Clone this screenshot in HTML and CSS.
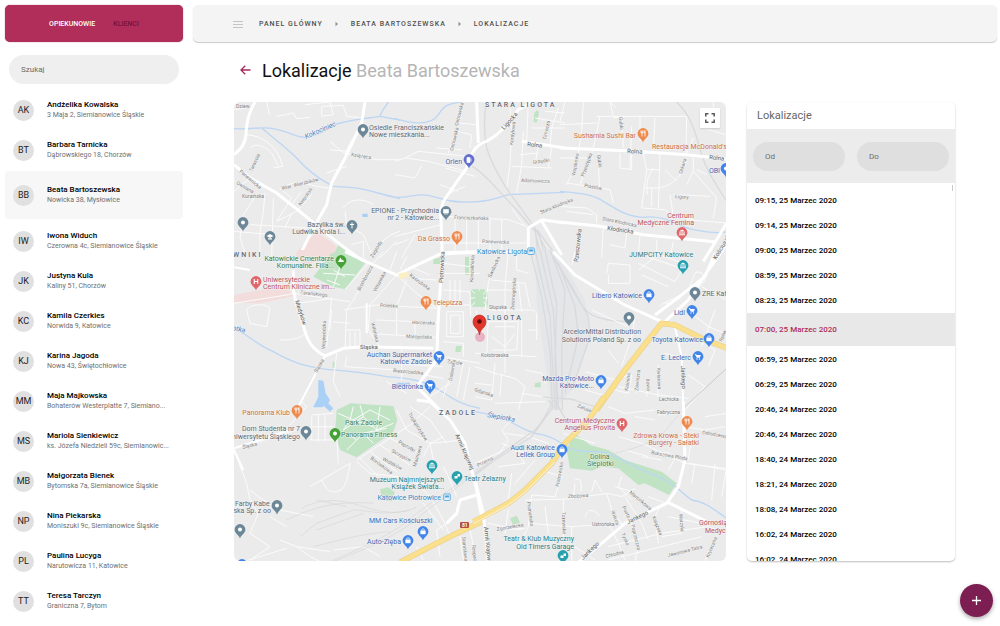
FILE: index.html
```html
<!DOCTYPE html>
<html lang="pl">
<head>
<meta charset="utf-8">
<meta name="viewport" content="width=device-width, initial-scale=1">
<title>Lokalizacje</title>
<link rel="stylesheet" href="styles.css">
</head>
<body>
<div class="app">
  <aside class="sidebar">
    <nav class="tabs">
      <a class="tab tab-active" href="#opiekunowie">OPIEKUNOWIE</a>
      <a class="tab" href="#klienci">KLIENCI</a>
    </nav>
    <input class="field search" type="search" placeholder="Szukaj" aria-label="Szukaj">
    <ul class="people">
      <li class="person"><span class="avatar">AK</span><div class="info"><strong class="name">Andżelika Kowalska</strong><span class="address">3 Maja 2, Siemianowice Śląskie</span></div></li>
      <li class="person"><span class="avatar">BT</span><div class="info"><strong class="name">Barbara Tarnicka</strong><span class="address">Dąbrowskiego 18, Chorzów</span></div></li>
      <li class="person person-active"><span class="avatar">BB</span><div class="info"><strong class="name">Beata Bartoszewska</strong><span class="address">Nowicka 38, Mysłowice</span></div></li>
      <li class="person"><span class="avatar">IW</span><div class="info"><strong class="name">Iwona Widuch</strong><span class="address">Czerowna 4c, Siemianowice Śląskie</span></div></li>
      <li class="person"><span class="avatar">JK</span><div class="info"><strong class="name">Justyna Kula</strong><span class="address">Kaliny 51, Chorzów</span></div></li>
      <li class="person"><span class="avatar">KC</span><div class="info"><strong class="name">Kamila Czerkies</strong><span class="address">Norwida 9, Katowice</span></div></li>
      <li class="person"><span class="avatar">KJ</span><div class="info"><strong class="name">Karina Jagoda</strong><span class="address">Nowa 43, Świętochłowice</span></div></li>
      <li class="person"><span class="avatar">MM</span><div class="info"><strong class="name">Maja Majkowska</strong><span class="address">Bohaterów Westerplatte 7, Siemiano...</span></div></li>
      <li class="person"><span class="avatar">MS</span><div class="info"><strong class="name">Mariola Sienkiewicz</strong><span class="address">ks. Józefa Niedzieli 59c, Siemianowic...</span></div></li>
      <li class="person"><span class="avatar">MB</span><div class="info"><strong class="name">Małgorzata Bienek</strong><span class="address">Bytomska 7a, Siemianowice Śląskie</span></div></li>
      <li class="person"><span class="avatar">NP</span><div class="info"><strong class="name">Nina Piekarska</strong><span class="address">Moniszuki 9c, Siemianowice Śląskie</span></div></li>
      <li class="person"><span class="avatar">PL</span><div class="info"><strong class="name">Paulina Lucyga</strong><span class="address">Narutowicza 11, Katowice</span></div></li>
      <li class="person"><span class="avatar">TT</span><div class="info"><strong class="name">Teresa Tarczyn</strong><span class="address">Graniczna 7, Bytom</span></div></li>
    </ul>
  </aside>

  <div class="page">
    <header class="topbar">
      <button class="icon-button" type="button" aria-label="Menu">
        <svg width="10" height="8" viewBox="0 0 10 8"><path d="M0 1.500h10M0 4.500h10M0 7.500h10" stroke="#c4c4c4"/></svg>
      </button>
      <nav class="crumbs" aria-label="Nawigacja">
        <a href="#panel">PANEL GŁÓWNY</a>
        <svg class="crumb-arrow" viewBox="0 0 4 6"><path d="M.5 0.800L3 3L.5 5.200Z" fill="#8d8d8d"/></svg>
        <a href="#beata">BEATA BARTOSZEWSKA</a>
        <svg class="crumb-arrow" viewBox="0 0 4 6"><path d="M.5 0.800L3 3L.5 5.200Z" fill="#8d8d8d"/></svg>
        <a href="#lokalizacje">LOKALIZACJE</a>
      </nav>
    </header>

    <main class="content">
      <div class="heading">
        <a class="back" href="#back" aria-label="Wstecz"><svg width="11" height="10" viewBox="0 0 11 10"><path d="M10.500 5H1.200M5.200 0.800L1 5L5.200 9.200" fill="none" stroke="#a52a5c" stroke-width="1.300"/></svg></a>
        <h1 class="title">Lokalizacje <span class="title-person">Beata Bartoszewska</span></h1>
      </div>

      <div class="columns">
        <section class="map-card" aria-label="Mapa">
          <svg class="map" viewBox="234 102 492 459" preserveAspectRatio="xMidYMid slice">
            <defs>
              <path id="drop" d="M0 8.500C-.8 5-5.400 3.500-5.400-.5A5.400 5.400 0 1 1 5.400-.5C5.400 3.500 .8 5 0 8.500Z"/>
              <g id="dot"><use href="#drop"/><circle r="2" cy="-.5" fill="#fff"/></g>
              <g id="fork"><use href="#drop"/><path d="M-2-3.500v2.500M-1-3.500v6M0-3.500v2.500M-2-1h2M2-3.500v6M2-3.500q-1 1.500 0 3" fill="none" stroke="#fff" stroke-width=".8"/></g>
              <g id="cart"><use href="#drop"/><path d="M-3.200-3h1.200l.5 1h4.300l-1 2.800h-3z" fill="#fff"/><circle cx="-1" cy="2" r=".7" fill="#fff"/><circle cx="1.500" cy="2" r=".7" fill="#fff"/></g>
              <g id="bag"><use href="#drop"/><path d="M-2.600-1.500h5.200v3.700h-5.200z" fill="#fff"/><path d="M-1.300-1.500v-1q1.300-1.500 2.600 0v1" fill="none" stroke="#fff" stroke-width=".8"/></g>
              <g id="hosp"><use href="#drop"/><path d="M-1.700-3v5M1.700-3v5M-1.700-.5h3.400" fill="none" stroke="#fff" stroke-width="1.100"/></g>
              <g id="museum"><use href="#drop"/><path d="M-3-1.500L0-3.500L3-1.500ZM-2.500-1h1v2.500h-1zM-.5-1h1v2.500h-1zM1.500-1h1v2.500h-1zM-3 1.500h6v.8h-6z" fill="#fff"/></g>
              <g id="train"><rect x="-3.200" y="-3" width="6.400" height="6.400" rx=".5" fill="#fff" stroke="#4aa3df" stroke-width=".9"/><path d="M-1.800-1.300h3.600v1.500h-3.600zM-1.500 1.800h.8M.7 1.800h.8" fill="#4aa3df" stroke="#4aa3df" stroke-width=".6"/></g>
            </defs>
            <rect x="234" y="102" width="492" height="459" fill="#ebebec"/>

            <g transform="translate(230 98) scale(.33333)">
              <path class="pink" d="M232 425L262 405L302 430L330 455L308 490H215L195 470Z"/>
              <path class="green" d="M325 442L400 490H300Z"/>
              <path class="river" d="M12 92C60 95 100 85 130 92C170 98 195 118 225 118C270 110 290 95 320 78C360 65 420 60 450 55L510 66M95 90C130 120 170 150 200 180C230 215 270 245 310 265L360 268C400 270 420 280 510 302M450 55C455 35 468 25 475 12"/>
              <path class="water" d="M397 347h16v10h-16z"/>
              <path class="minor" d="M12 35L60 28M110 12L118 50M140 55L190 45L200 62L240 58M225 20L300 12L310 50L275 55V25L340 22L350 55L395 60M50 110C100 115 130 140 150 180L158 205L130 210M60 150C80 130 110 150 125 165L145 205M12 280L60 240M80 290L40 350L30 420L50 480M105 285L100 340L90 400V480M130 300L125 480M150 275C180 250 210 250 260 265L295 270M160 280L185 300L140 370M185 320L215 280M205 335L245 290M140 370L200 340M165 390L185 345M60 380L230 390M12 400L130 410M300 130L340 165L440 185L510 185M300 155L350 160M345 165L365 125M290 225L350 205M340 330C360 300 400 300 430 320M345 340L350 380L400 410L430 480M365 440L400 430V480M430 480C440 440 470 410 510 400M450 480L500 430"/>
              <path class="main" d="M75 12C60 40 50 60 48 110C46 140 30 155 12 170M12 200L60 240L140 285L215 345L300 415L345 450L400 490M405 12L395 75L345 180L305 255L290 320L262 370L235 420L205 480"/>
            </g>
            <g transform="translate(395 98) scale(.33333)">
              <path class="river" d="M0 298C50 300 60 285 100 292C140 300 150 312 200 312C260 315 290 305 340 290L510 283M0 62C60 80 110 80 130 50C145 25 160 15 200 12"/>
              <path class="green" d="M418 45l8-8 6 4-6 32h-10z"/>
              <path class="minor" d="M0 190L30 180L100 190L215 220M30 180L70 160L215 175M80 205L60 240L0 230M185 100L230 110L225 150M200 50L160 165M190 75L245 80M125 150L200 155M150 210L240 235M135 260L190 280M165 285L210 265M345 30L350 100L345 200L335 270M385 100L380 200L365 285M350 205L470 210M375 170L430 165M400 12L395 130M430 145L420 200M470 150L460 210M490 30L470 90L465 150M420 60L510 75M410 90H510M510 45L450 40M145 355L340 365L395 385M180 365V460M215 365V460M250 365V460M285 365V460M320 365V460M145 435H395M350 330L390 385M0 415L60 400L140 380M0 440L40 425M20 480L60 410"/>
              <path class="rail" d="M275 12C265 60 268 110 275 150C290 200 330 270 370 320L420 390L465 480M232 205C270 225 320 290 360 330L420 400L440 480M420 390L430 480M425 395L490 480M430 398L450 480"/>
              <path class="main" d="M415 12L370 35C350 60 330 100 275 130C235 140 225 180 215 210L190 245L145 310L137 340L142 480M245 12L250 135M380 130L510 150M440 365L510 375M440 365L400 390V455M438 365L500 470M130 470C200 460 300 465 410 460"/>
            </g>
            <g transform="translate(560 98) scale(.33333)">
              <path class="river" d="M0 280C60 285 100 290 130 310C180 340 200 355 250 358C320 350 350 385 400 395C450 405 480 405 497 402"/>
              <path class="minor" d="M15 12L0 70M70 12L65 100L50 200L20 260M110 55H380L378 165M120 55L100 150L90 180L60 260M150 12L160 55M185 60L190 150M215 85L210 215M240 50V130M285 60L280 155M0 80L110 75M0 180H100M20 255L150 275L160 315M115 165L118 270M180 165V210L215 215V170M250 165L260 215L245 330L315 335L330 350M300 165L295 330M260 215H300M250 270H295C330 265 370 240 380 180M315 215L350 250M330 290L340 355L400 365M340 290L450 295M400 180V220L470 300L460 360M400 220L380 260M410 215L440 230M160 60L195 55M0 325L80 330L110 350V375M400 120L380 165M430 90L497 110M460 50V12M150 12L170 30M130 385L125 480M55 405L45 480M200 405L195 450L150 440M340 430L330 480M290 425V470M380 365L497 375M240 415L235 470M280 210C260 240 260 250 262 290M275 270V325M20 340L100 350"/>
              <path class="rail" d="M350 12C400 60 410 120 425 170C440 220 480 280 500 310"/>
              <path class="main" d="M0 150L200 158L380 170L500 183M0 372L120 385L250 410L350 420L470 432M500 375L455 450L430 490"/>
            </g>
            <g transform="translate(230 250) scale(.33333)">
              <path class="pink" d="M12 135L80 122L165 105L192 138L90 160L12 158ZM205 0H300L285 20L230 45L200 20Z"/>
              <path class="green" d="M250 80L305 8L345 10L405 40L345 118L310 110ZM678 288h18l-4 18h-16zM610 28l24-6v20h-24zM705 20h12v55h-12zM722 118h52v52h-52zM308 335h6v18h-6z"/>
              <path class="river" d="M12 235C50 250 80 285 130 305C190 340 230 350 290 358C380 365 420 370 470 380C530 385 580 390 620 415C660 440 690 465 750 475"/>
              <path class="water" d="M265 390L280 392L287 430L300 450L292 466L285 462L278 472L250 472L265 440ZM500 398h40v12h-40z"/>
              <path class="minor" d="M12 160L170 135L190 130M190 130L310 148L360 155M205 160L305 145L290 290M310 215L360 220M305 180L300 240M50 180C60 160 110 160 120 175L110 230L60 220ZM150 270C190 270 215 265 232 245M310 60L345 80M280 70L375 75M330 50L310 110M290 90L330 105M345 118L415 40M345 240H390L390 290M360 245V290M375 245V290M320 310L310 395L330 440M350 320L345 350L500 360L640 385M430 40L370 150L350 180L345 300M500 75L420 165L415 240L450 290M530 90L500 170V210M500 75L560 130L620 175M340 180L440 165L620 175M440 210L620 218M440 252L620 262M500 215V255M555 220V260M515 290V390M480 340L640 350M460 5L430 40M500 5L480 60M530 20L510 60M540 50L600 75M545 85L620 90M640 40L720 50M640 70H750M640 120L720 125L722 200M650 185H700V260H650ZM662 195H690V250H662ZM640 320L750 340M670 350L650 410L640 440M700 340L680 440M720 350L700 450M640 275L700 280V320M660 90V165M690 90V165M675 90V170M640 165H720M722 118L774 170M774 118L722 170M748 118V170M722 144H774M740 180V270M470 395L530 430M500 410L560 415M600 440L660 400"/>
              <path class="street" d="M285 318L200 480M0 50L60 60M410 160V250"/>
              <path class="main" d="M345 5L420 40L500 75L550 50L640 8L750 5M638 8L625 200L620 330L575 390L560 410L640 490M190 60L190 120C200 180 215 200 225 245C240 290 260 305 285 318L340 295L400 290L610 295"/>
              <path d="M505 70l28-4 4 14-28 8z" fill="#fbefc4"/>
            </g>
            <g transform="translate(475 250) scale(.33333)">
              <path class="green" d="M180 400l16-4 2 16h-20zM0 122H24L26 170H0Z"/>
              <path d="M180 0H240L330 150L345 260L290 420L240 480L225 440L185 160Z" fill="#e5e6e8"/>
              <path class="rail" d="M165 0L200 140L225 300L232 480M180 0L225 200L240 480M195 0L235 180L250 480M210 0L245 160L240 330L245 480M225 0L270 120L260 300L262 480M235 20L290 110L340 200L345 260L290 420M240 30L310 150C330 180 340 200 400 210L450 215L480 205M250 40L300 170L310 260L270 430M205 440C250 450 290 440 310 455L360 470"/>
              <path class="minor" d="M290 45L300 5M65 20L40 100L30 180M100 5L90 110V370M125 0V60L160 70M50 90L150 100L165 170M30 120H130M40 180H175L185 190V270M130 100L140 185M140 210V320M160 240H185M40 215H130L125 300H50M60 230H120M50 260L90 290L120 250M0 310L185 320M40 200L35 330M0 350L60 370L120 385L150 410L130 480M60 340L50 450L0 440M80 370L75 440M0 400L50 405M150 360L200 370L210 400M140 430L200 440M395 70L400 40L465 45V100H400V75M490 40L600 95M500 75L580 110M515 20L620 55M540 10L640 45M490 60L560 5M600 95L620 60M555 170C570 150 600 150 640 120L660 70C670 60 690 70 690 90L640 150M550 180C555 190 565 185 570 170M570 160C590 160 610 150 620 140M350 180L460 230M480 200L470 260L440 350M400 300L430 340M330 365L440 395M330 420L400 440M440 380L470 375L460 430L420 420M490 375L485 430M520 385L515 440M550 345L548 440M430 410L550 435L640 445M570 310L620 325M640 375L690 410L630 480M650 190L700 230L750 250M680 110L755 150M720 180L680 290M700 290L720 300L700 350"/>
              <path d="M755 355L630 470" stroke="#c9c9c9" stroke-width="3" fill="none"/>
              <path class="main" d="M235 5L300 75L400 135L450 165L560 215L570 215L640 150L700 60L735 12L750 -10M540 195L600 150L690 80L720 10"/>
              <path class="street" d="M600 230L620 320L625 480"/>
              <path class="hwy-edge" d="M365 480L450 360L520 270L560 220L600 225L680 265L757 295"/>
              <path class="hwy" d="M365 480L450 360L520 270L560 220L600 225L680 265L757 295"/>
            </g>
            <g transform="translate(230 400) scale(.33333)">
              <path class="green" d="M320 30L362 10L490 18L502 60L490 95L380 172L330 150L315 100ZM450 268l24-6 20 14-8 28-30-4z"/>
              <path class="water" d="M250 15L290 5L310 25L300 35L275 12L255 22Z"/>
              <path class="minor" d="M325 40L370 60L420 30L480 60M340 90L400 50L440 90L490 70M350 150L400 100L430 130M370 20L360 60L340 90M400 50L390 15M440 90L450 20M380 120L350 100M400 100L470 85M370 60L430 80M245 50V120M265 45V125M285 45V125M245 80H310M245 45L310 40M240 120H320M320 100L325 190M12 150L50 250L60 300L85 340M40 140L200 90M85 290L60 270M180 75L230 20L215 5M240 260L360 190C350 260 340 275 310 275C290 275 285 260 275 240M380 185L420 220L500 230M390 175L450 235M420 155L500 215M450 135L540 195M480 115L570 160M380 180L540 75L600 20M500 30L530 90L600 130L580 170M540 20L600 60L650 130M600 130L700 120M610 180L600 130L640 110M500 230L580 250L630 270M540 230L600 290L640 360L660 410M640 200L660 240L680 290M580 310L640 390M85 290L150 330L250 350M85 340L60 400L120 440L60 480M120 350L170 380M150 420L200 440L240 470M200 440L300 455M240 470L280 490M630 470L620 390L650 370M690 410L700 480M720 390L740 480M560 440L580 480M40 485L170 445M310 450L400 440L450 470"/>
              <path class="thin-rail" d="M210 410L260 370L370 330C420 330 450 350 540 330M215 325C280 290 340 300 400 320C460 340 520 345 560 320M170 360C230 330 310 300 430 310M260 390L400 340M260 300L350 320M300 485C380 450 500 400 560 340L700 240L750 200M310 485C400 450 520 400 580 340L710 240L750 215M250 440C330 420 400 400 480 395"/>
              <path class="street" d="M12 150L40 210M12 145L180 90"/>
              <path class="main" d="M560 0L600 5L660 60L705 130L740 270L755 350M740 285L690 300L680 340L650 370"/>
              <path class="hwy-edge" d="M510 487L600 440L680 400L755 365"/>
              <path class="hwy" d="M510 487L600 440L680 400L755 365"/>
            </g>
            <g transform="translate(475 400) scale(.33333)">
              <path class="green" d="M290 115L305 105L345 135L400 150L450 180L560 215L605 250L582 285L510 250L490 255L430 205L380 200L350 212L285 205L275 150ZM105 355l20-8 10 20-20 8z"/>
              <path class="river" d="M0 35C30 40 60 45 90 55C130 80 150 90 180 100C230 105 250 125 285 145C320 160 370 150 400 160C440 175 500 215 550 230C600 250 620 280 650 300C690 305 720 330 755 355"/>
              <path class="minor" d="M60 10L210 5M120 50L80 90L100 120L60 180M90 100L160 110L220 130M80 130L150 160M120 150L150 190L70 200M0 190L90 150M180 180L120 250M200 210L260 230L240 290L170 285L160 380L130 440M110 220L100 300M265 100L360 130M240 160L260 170M300 240C320 230 320 250 318 275M300 250L295 290M350 275L360 240L380 275M150 300L265 298L400 280L440 290L480 265M265 298V420M395 280L410 330L440 370M440 230L430 260L470 300M450 290L500 370L520 420M420 260L470 275M520 290L575 310M480 50L540 60M550 45L620 40M400 20L450 40L540 30M430 110L500 130L630 190L750 205M450 150L520 170M560 165C570 150 590 160 600 175L580 210M500 170L560 180M630 80L690 90L750 80M650 110L640 180M690 50L755 40M660 190L650 250M720 190L710 300M640 190L755 210M755 200L740 290M160 370L290 380L440 370M290 380V485M210 320L220 400M80 390L150 385M40 370L140 390M100 330L90 400M330 350C340 320 360 330 375 350M400 370L430 430L450 480M470 370L490 440L480 485M540 350L550 430M620 330V400L560 410M560 310L540 350M400 440L560 400L700 380L755 400M400 480L560 440L680 410M690 485L720 410M300 440L360 480M580 350L680 370"/>
              <path class="rail" d="M0 220L80 160L180 90C210 60 220 30 235 0M0 225L60 180L170 110L235 20M235 20L220 0M240 0L270 55"/>
              <path class="thin-rail" d="M370 175C430 150 530 150 590 70L640 10"/>
              <path class="main" d="M0 240L25 340L40 490M625 5L630 180L610 260L575 310L510 340L450 370L380 430L310 487M575 305L695 365"/>
              <path class="hwy-edge" d="M388 -10L340 60L270 130L230 190L150 270L100 310L-5 365"/>
              <path class="hwy" d="M388 -10L340 60L270 130L230 190L150 270L100 310L-5 365"/>
              <path d="M240 185L150 277L100 315L-5 372" fill="none" stroke="#fff" stroke-width="2"/>
            </g>

            <g class="st">
              <text x="239" y="172" transform="rotate(40 239 172)">Panewnicka</text>
              <text x="252" y="172" transform="rotate(-65 252 172)">Tarasola</text>
              <text x="236" y="184" transform="rotate(30 236 184)">Owsiana</text>
              <text x="242" y="198">Kuraińska</text>
              <text x="282" y="190" transform="rotate(-14 282 190)">Wiar. Wierzbików</text>
              <text x="301" y="206" transform="rotate(-55 301 206)">Niepołoń</text>
              <text x="351" y="156" transform="rotate(9 351 156)">Książęca</text>
              <text x="236" y="108">Dziew.</text>
              <text x="453" y="151" transform="rotate(-76 453 151)">Ostrowska</text>
              <text x="458" y="126" transform="rotate(-76 458 126)">Ostrowska</text>
              <text class="st-main" x="504" y="130" transform="rotate(-48 504 130)">Ligocka</text>
              <text class="st-main" x="527" y="146" transform="rotate(6 527 146)">Rolna</text>
              <text x="513" y="145" transform="rotate(-84 513 145)">Kordylowa</text>
              <text x="546" y="140" transform="rotate(-78 546 140)">Timocza</text>
              <text x="533" y="164" transform="rotate(-8 533 164)">Grzędki</text>
              <text x="521" y="182" transform="rotate(2 521 182)">Adamowicza</text>
              <text x="541" y="214" transform="rotate(-22 541 214)">Stara Kłodnicka</text>
              <text x="454" y="219" transform="rotate(2 454 219)">Franciszkańska</text>
              <text x="482" y="243" transform="rotate(2 482 243)">Panewnicka</text>
              <text class="st-main" x="627" y="153" transform="rotate(3 627 153)">Rolna</text>
              <text class="st-main" x="709" y="159" transform="rotate(6 709 159)">Rolna</text>
              <text x="575" y="176" transform="rotate(-80 575 176)">Wojskowa</text>
              <text x="584" y="177" transform="rotate(-70 584 177)">Przestępka</text>
              <text x="597" y="155" transform="rotate(82 597 155)">Gubki</text>
              <text x="619" y="117" transform="rotate(86 619 117)">Gubki</text>
              <text x="584" y="187" transform="rotate(10 584 187)">Piastów</text>
              <text x="682" y="174" transform="rotate(-73 682 174)">Orkana</text>
              <text x="675" y="198" transform="rotate(4 675 198)">Ligory</text>
              <text x="602" y="220" transform="rotate(12 602 220)">Stara Kłodnicka</text>
              <text class="st-main" x="607" y="230" transform="rotate(8 607 230)">Kłodnicka</text>
              <text class="st-main" x="578" y="262" transform="rotate(-84 578 262)">Rzeszowska</text>
              <text class="st-main" x="716" y="260" transform="rotate(-58 716 260)">Kościuszki</text>
              <text class="st-main" x="295" y="301" transform="rotate(72 295 301)">Medyków</text>
              <text x="300" y="294" transform="rotate(6 300 294)">Zarańskiego</text>
              <text x="325" y="349" transform="rotate(-88 325 349)">Wojewódzka</text>
              <text x="360" y="291" transform="rotate(-62 360 291)">Bromboszcz</text>
              <text x="376" y="292" transform="rotate(-62 376 292)">Witaninka</text>
              <text x="373" y="258" transform="rotate(-60 373 258)">Zagrody</text>
              <text x="409" y="276" transform="rotate(36 409 276)">Kaszubska</text>
              <text x="380" y="307" transform="rotate(2 380 307)">Poleska</text>
              <text x="412" y="324" transform="rotate(2 412 324)">Harcerska</text>
              <text x="406" y="338" transform="rotate(2 406 338)">Małopolska</text>
              <text x="371" y="323" transform="rotate(76 371 323)">Wileńska</text>
              <text class="st-main" x="360" y="349">Śląska</text>
              <text x="317" y="373" transform="rotate(-60 317 373)">Śląska</text>
              <text class="st-main" x="443" y="283" transform="rotate(-87 443 283)">Piotrowicka</text>
              <text x="473" y="282" transform="rotate(-87 473 282)">Koszalińska</text>
              <text x="393" y="372" transform="rotate(5 393 372)">Bieszczadzka</text>
              <text x="447" y="363" transform="rotate(8 447 363)">Zadole</text>
              <text x="452" y="381" transform="rotate(-80 452 381)">Dalewska</text>
              <text x="491" y="278" transform="rotate(-66 491 278)">Świdnicka</text>
              <text x="514" y="310" transform="rotate(-86 514 310)">Zielonogórska</text>
              <text x="489" y="309">Słupska</text>
              <text x="481" y="357">Kołobrzeska</text>
              <text x="474" y="391" transform="rotate(18 474 391)">Gdańska</text>
              <text x="577" y="407" transform="rotate(22 577 407)">Załusk</text>
              <text x="628" y="391" transform="rotate(-82 628 391)">Kalinina</text>
              <text x="638" y="391" transform="rotate(-84 638 391)">Zawiszna</text>
              <text x="646" y="379" transform="rotate(86 646 379)">Iłowa</text>
              <text x="657" y="368" transform="rotate(88 657 368)">Kwiatowa</text>
              <text class="st-main" x="681" y="366" transform="rotate(88 681 366)">Jankego</text>
              <text x="659" y="401">Lechicka</text>
              <text x="657" y="414">Fabryczna</text>
              <text x="722" y="342" transform="rotate(-68 722 342)">Rzew</text>
              <text x="243" y="449" transform="rotate(-14 243 449)">Śląska</text>
              <text x="408" y="414" transform="rotate(58 408 414)">Trojkątczyków</text>
              <text x="398" y="443" transform="rotate(30 398 443)">Paprotki</text>
              <text x="391" y="452" transform="rotate(28 391 452)">Skrzypów</text>
              <text x="382" y="460" transform="rotate(28 382 460)">Widłaków</text>
              <text x="370" y="459" transform="rotate(36 370 459)">Borówkowa</text>
              <text x="416" y="467" transform="rotate(-74 416 467)">Malinowa</text>
              <text class="st-main" x="455" y="435" transform="rotate(66 455 435)">Armii Krajowej</text>
              <text class="st-main" x="484" y="527" transform="rotate(84 484 527)">Armii Krajowej</text>
              <text x="462" y="537" transform="rotate(84 462 537)">Stanisława</text>
              <text x="472" y="545" transform="rotate(84 472 545)">Rzepaczy</text>
              <text x="478" y="467" transform="rotate(-26 478 467)">Przerna</text>
              <text x="559" y="487" transform="rotate(-80 559 487)">Piotrowska</text>
              <text x="568" y="498" transform="rotate(-3 568 498)">Zbożowa</text>
              <text x="527" y="502" transform="rotate(82 527 502)">Poznańska</text>
              <text x="562" y="512" transform="rotate(88 562 512)">Tczewska</text>
              <text x="497" y="531" transform="rotate(-10 497 531)">Zgorzelecka</text>
              <text x="592" y="526">Ustrońska</text>
              <text x="611" y="511" transform="rotate(70 611 511)">Wiśrca</text>
              <text x="622" y="507" transform="rotate(64 622 507)">Pusta</text>
              <text x="621" y="534" transform="rotate(64 621 534)">Tyska</text>
              <text x="629" y="493" transform="rotate(40 629 493)">Marcinkowa</text>
              <text class="st-main" x="628" y="524" transform="rotate(-26 628 524)">Jankego</text>
              <text x="631" y="525" transform="rotate(76 631 525)">Poprzeczna</text>
              <text x="652" y="517" transform="rotate(68 652 517)">Książska</text>
              <text x="679" y="514" transform="rotate(84 679 514)">Warzyła</text>
              <text x="651" y="454" transform="rotate(10 651 454)">Bukszowa Ploda</text>
              <text x="702" y="434" transform="rotate(10 702 434)">Odrodzenia</text>
              <text x="606" y="558" transform="rotate(-14 606 558)">Chłodna</text>
              <text x="668" y="557" transform="rotate(-14 668 557)">Jaworowa Tatra</text>
              <text x="709" y="558" transform="rotate(-68 709 558)">Kryniczna</text>
              <text class="st-main" x="583" y="560" transform="rotate(-44 583 560)">Jankego</text>
            </g>

            <g class="river-name">
              <text x="306" y="139" transform="rotate(-24 306 139)">Kokociniec</text>
              <text x="487" y="417" transform="rotate(10 487 417)">Ślepiotka</text>
              <text x="232" y="330" transform="rotate(12 232 330)">otka</text>
            </g>
            <g class="district">
              <text x="485" y="107">STARA LIGOTA</text>
              <text x="233" y="257">WNIKI</text>
              <text x="487" y="320">LIGOTA</text>
              <text x="439" y="415">ZADOLE</text>
            </g>

            <g class="poi slate">
              <text x="369" y="130">Osiedle Franciszkańskie</text><text x="369" y="137">Nowe mieszkania...</text>
              <text class="end" x="345" y="227">Bazylika św.</text><text class="end" x="345" y="234">Ludwika Króla i...</text>
              <text class="end" x="439" y="213">EPIONE - Przychodnia</text><text class="end" x="439" y="220">nr 2 - Katowice...</text>
              <text x="702" y="296">ZRE Katowice</text>
              <text class="end" x="641" y="334">ArcelorMittal Distribution</text><text class="end" x="641" y="342">Solutions Poland Sp. z oo</text>
              <text class="end" x="300" y="431">Dom Studenta nr 7</text><text class="end" x="300" y="439">Uniwersytetu Śląskiego</text>
              <text x="235" y="506">Farby Kabe</text><text class="end" x="271" y="513">Polska Sp. z oo</text>
            </g>
            <g class="poi green-text">
              <text x="590" y="459">Dolina</text><text x="587" y="466">Ślepiotki</text>
              <text x="345" y="425">Park Zadole</text>
              <text class="end" x="334" y="261">Katowickie Cmentarze</text><text class="end" x="334" y="268">Komunalne. Filia...</text>
              <text x="341" y="437">Panorama Fitness</text>
            </g>
            <g class="poi orange">
              <text class="end" x="636" y="138">Susharnia Sushi Bar</text>
              <text x="652" y="149">Restauracja McDonald's</text>
              <text class="end" x="450" y="241">Da Grasso</text>
              <text x="433" y="305">Telepizza</text>
              <text class="end" x="290" y="415">Panorama Klub</text>
              <text class="end" x="699" y="438">Zdrowa Krowa - Steki</text><text class="end" x="699" y="445">Burgery - Sałatki</text>
            </g>
            <g class="poi red">
              <text class="end" x="694" y="218">Centrum</text><text class="end" x="694" y="225">Medyczne Femina</text>
              <text x="263" y="282">Uniwersyteckie</text><text x="263" y="289">Centrum Kliniczne im...</text>
              <text class="end" x="615" y="423">Centrum Medyczne</text><text class="end" x="615" y="430">Angelius Provita</text>
              <text x="699" y="525">Górnośląskie</text><text x="705" y="533">Medyczne</text>
            </g>
            <g class="poi blue">
              <text class="end" x="462" y="164">Orlen</text><text class="end" x="720" y="173">OBI</text>
              <text class="end" x="642" y="298">Libero Katowice</text><text class="end" x="685" y="315">Lidl</text>
              <text class="end" x="703" y="342">Toyota Katowice</text><text class="end" x="691" y="360">E. Leclerc</text>
              <text class="end" x="594" y="381">Mazda Pro-Moto</text><text class="end" x="594" y="388">Katowice...</text>
              <text class="end" x="432" y="357">Auchan Supermarket</text><text class="end" x="432" y="364">Katowice Zadole</text>
              <text class="end" x="423" y="389">Biedronka</text>
              <text class="end" x="555" y="450">Audi Katowice</text><text class="end" x="555" y="457">Lellek Group</text>
              <text x="369" y="523">MM Cars Kościuszki</text><text class="end" x="401" y="544">Auto-Zięba</text>
            </g>
            <g class="poi teal">
              <text x="629" y="257">JUMPCITY Katowice</text>
              <text class="end" x="444" y="482">Muzeum Najmniejszych</text><text class="end" x="444" y="489">Książek Świata...</text>
              <text x="464" y="481">Teatr Żelazny</text>
              <text class="end" x="574" y="541">Teatr &amp; Klub Muzyczny</text><text class="end" x="574" y="549">Old Timers Garage</text>
            </g>
            <g class="poi sky">
              <text class="end" x="527" y="254">Katowice Ligota</text>
              <text class="end" x="441" y="500">Katowice Piotrowice</text>
            </g>

            <g fill="#6c8797">
              <use href="#dot" x="363" y="130"/><use href="#dot" x="243" y="223"/>
              <use href="#drop" x="270" y="237"/><path d="M266.500 236l3.500-2 3.500 2-3.500 2zM268 238.200h4v1.300h-4z" fill="#fff"/>
              <use href="#drop" x="352" y="226"/><path d="M352 222.500v6M350 224.500h4" stroke="#fff" stroke-width="1"/>
              <use href="#drop" x="446" y="212"/><path d="M443.500 209.500h5v3.500h-5zM444 214h4" fill="#fff" stroke="#fff" stroke-width=".6"/>
              <use href="#dot" x="695" y="293"/><use href="#dot" x="629" y="318"/><use href="#dot" x="306" y="432"/>
              <use href="#dot" x="277" y="506"/><use href="#dot" x="240" y="530"/>
            </g>
            <g fill="#ef8a4c">
              <use href="#fork" x="643" y="134"/><use href="#fork" x="457" y="237"/><use href="#fork" x="426" y="302"/>
              <use href="#fork" x="297" y="411"/><use href="#fork" x="687" y="422"/>
            </g>
            <g fill="#e0666a"><use href="#hosp" x="256" y="282"/><use href="#museum" x="682" y="233"/><use href="#hosp" x="622" y="424"/></g>
            <g fill="#4285e8">
              <use href="#dot" x="726" y="169"/><use href="#bag" x="649" y="295"/><use href="#cart" x="692" y="311"/>
              <use href="#bag" x="709" y="339"/><use href="#cart" x="698" y="357"/><use href="#bag" x="601" y="381"/>
              <use href="#cart" x="439" y="357"/><use href="#cart" x="430" y="386"/><use href="#bag" x="562" y="450"/>
              <use href="#bag" x="423" y="532"/><use href="#bag" x="408" y="541"/><use href="#dot" x="242" y="565"/>
            </g>
            <g fill="#6470cf"><use href="#drop" x="469" y="160"/><path d="M467 157.500h3v5h-3zM471 158.500v3" fill="#fff" stroke="#fff" stroke-width=".7"/></g>
            <g fill="#46a236"><use href="#drop" x="341" y="261"/><path d="M338 262l2.500-4.500 1.500 3 1-1 1 2.500z" fill="#fff"/><use href="#dot" x="335" y="434"/></g>
            <g fill="#27a1af">
              <use href="#museum" x="683" y="266"/><use href="#museum" x="432" y="466"/>
              <use href="#drop" x="457" y="477"/><path d="M454.500 476h3v2.500h-3zM457.500 474h2.500v2.500h-2.500z" fill="#fff"/>
              <use href="#drop" x="563" y="556"/><path d="M560.500 555.500h3v2.500h-3zM563.500 553.500h2.500v2.500h-2.500z" fill="#fff"/>
            </g>
            <use href="#train" x="531" y="251"/><use href="#train" x="447" y="497"/>
            <rect x="460" y="522" width="9" height="6" rx="1" fill="#b5503f"/><text class="shield" x="462" y="527">81</text>
            <circle cx="480" cy="337" r="5" fill="#e8b4c4"/>
            <path d="M479.500 335C479 328.500 473 328 473 321.500A6.500 6.500 0 0 1 486 321.500C486 328 480 328.500 479.500 335Z" fill="#e3352b" stroke="#b5231b" stroke-width=".6"/>
            <circle cx="479.500" cy="321.500" r="2.300" fill="#5c0f0a"/>
          </svg>
          <button class="fullscreen" type="button" aria-label="Pełny ekran">
            <svg width="10" height="10" viewBox="0 0 10 10"><path d="M.8 3.500V.8H3.500M6.500 .8H9.200V3.500M9.200 6.500V9.200H6.500M3.500 9.200H.8V6.500" fill="none" stroke="#606060" stroke-width="1.600"/></svg>
          </button>
        </section>

        <section class="panel">
          <h2 class="panel-title">Lokalizacje</h2>
          <div class="filters">
            <input class="field date" type="text" placeholder="Od" aria-label="Od">
            <input class="field date" type="text" placeholder="Do" aria-label="Do">
          </div>
          <ul class="times">
            <li class="time">09:15, 25 Marzec 2020</li>
            <li class="time">09:14, 25 Marzec 2020</li>
            <li class="time">09:00, 25 Marzec 2020</li>
            <li class="time">08:59, 25 Marzec 2020</li>
            <li class="time">08:23, 25 Marzec 2020</li>
            <li class="time time-active">07:00, 25 Marzec 2020</li>
            <li class="time">06:59, 25 Marzec 2020</li>
            <li class="time">06:29, 25 Marzec 2020</li>
            <li class="time">20:46, 24 Marzec 2020</li>
            <li class="time">20:46, 24 Marzec 2020</li>
            <li class="time">18:40, 24 Marzec 2020</li>
            <li class="time">18:21, 24 Marzec 2020</li>
            <li class="time">18:08, 24 Marzec 2020</li>
            <li class="time">16:02, 24 Marzec 2020</li>
            <li class="time">16:02, 24 Marzec 2020</li>
          </ul>
        </section>
      </div>
    </main>
  </div>
</div>
<button class="fab" type="button" aria-label="Dodaj"><svg width="9" height="9" viewBox="0 0 9 9"><path d="M4.500 0V9M0 4.500H9" stroke="#fff" stroke-width="1.300"/></svg></button>
</body>
</html>
```
FILE: styles.css
```css
* { box-sizing: border-box; }

body {
  margin: 0;
  background: #fff;
  color: #1c1c1c;
  font-family: Roboto, "Liberation Sans", sans-serif;
  font-size: 8px;
}

a { color: inherit; text-decoration: none; }
ul { margin: 0; padding: 0; list-style: none; }
button { border: 0; padding: 0; background: none; cursor: pointer; }
svg { display: block; }

.app {
  display: grid;
  grid-template-columns: 178px minmax(0, 1fr);
  gap: 10px;
  height: 100vh;
  padding: 5px 3px 0 5px;
}

.tabs {
  display: flex;
  align-items: center;
  justify-content: center;
  gap: 18px;
  height: 37px;
  border-radius: 5px;
  background: #b12d5a;
  box-shadow: 0 0 1px #8c2348;
  font-size: 7px;
  font-weight: 500;
}
.tab { color: #741338; }
.tab-active { color: #fff; }

.field {
  display: block;
  min-width: 0;
  height: 29px;
  padding: 0 12px;
  border: 0;
  border-radius: 15px;
  background: #efefef;
  color: #333;
  font: 8px Roboto, "Liberation Sans", sans-serif;
}
.field::placeholder { color: #6c6c6c; opacity: 1; }
.search { width: 170px; margin: 13px 4px 6px; }

.person {
  display: flex;
  align-items: center;
  gap: 13px;
  height: 40px;
  padding: 0 8px;
}
.person-active {
  height: 48px;
  margin: 1px 0 2px;
  border-radius: 4px;
  background: #f7f7f7;
}
.avatar {
  display: grid;
  flex: none;
  place-items: center;
  width: 21px;
  height: 21px;
  border-radius: 50%;
  background: #e0e0e0;
  color: #222;
  font-size: 9px;
}
.info { min-width: 0; white-space: nowrap; }
.name { display: block; font-weight: 500; line-height: 10px; color: #000; }
.address { display: block; font-size: 7px; line-height: 10px; color: #6f6f6f; }

.page { display: flex; flex-direction: column; min-height: 0; }
.topbar {
  display: flex;
  flex: none;
  align-items: center;
  gap: 16px;
  height: 37px;
  padding: 0 40px;
  border-radius: 5px;
  background: #f4f4f4;
  box-shadow: 0 1px 1px #c9c9c9;
}
.crumbs {
  display: flex;
  align-items: center;
  gap: 12px;
  color: #4f4f4f;
  font-size: 7px;
  font-weight: 500;
  letter-spacing: 1px;
}
.crumb-arrow { width: 4px; height: 6px; }

.content {
  display: flex;
  flex: 1;
  flex-direction: column;
  min-height: 0;
  padding: 0 42px 65px 41px;
}
.heading {
  display: flex;
  align-items: center;
  gap: 11px;
  height: 60px;
  padding: 0 6px 4px;
}
.title { margin: 0; color: #111; font-size: 18px; font-weight: 400; }
.title-person { color: #b5b5b5; }

.columns {
  display: grid;
  flex: 1;
  grid-template-columns: minmax(0, 1fr) 208px;
  grid-template-rows: minmax(0, 1fr);
  gap: 21px;
  min-height: 0;
}
.map-card { position: relative; overflow: hidden; border-radius: 6px; }
.map { width: 100%; height: 100%; }
.fullscreen {
  position: absolute;
  top: 6px;
  right: 6px;
  display: grid;
  place-items: center;
  width: 20px;
  height: 20px;
  border-radius: 1px;
  background: #fff;
  box-shadow: 0 1px 2px #ccc;
}

.pink { fill: #f3dcdc; }
.green { fill: #c0e3c3; }
.water { fill: #aad0f5; }
.river { fill: none; stroke: #bdd6f3; stroke-width: 4px; }
.minor { fill: none; stroke: #fbfbfb; stroke-width: 3px; }
.street { fill: none; stroke: #fff; stroke-width: 6px; }
.main { fill: none; stroke: #fff; stroke-width: 9px; stroke-linejoin: round; }
.rail { fill: none; stroke: #d9dadd; stroke-width: 4px; }
.thin-rail { fill: none; stroke: #d6d6d8; stroke-width: 2px; }
.hwy-edge { fill: none; stroke: #ecd08a; stroke-width: 17px; stroke-linejoin: round; }
.hwy { fill: none; stroke: #fbe08c; stroke-width: 13px; stroke-linejoin: round; }

.map text { paint-order: stroke; stroke: #f3f3f3; stroke-width: 1px; stroke-linejoin: round; }
.st { fill: #808080; font-size: 5px; }
.st-main { fill: #606060; font-size: 6px; }
.poi { font-size: 7px; }
.end { text-anchor: end; }
.slate { fill: #5b6a73; }
.orange { fill: #cf7043; }
.red { fill: #bd5458; }
.blue { fill: #4068b0; }
.green-text { fill: #3a7f42; }
.teal { fill: #1f7f8b; }
.sky { fill: #2f86c4; }
.river-name { fill: #4f7fc0; font-size: 7px; font-style: italic; }
.district { fill: #606878; font-size: 7px; font-weight: 500; letter-spacing: 2px; }
.map .shield { fill: #fff; stroke: none; font-size: 5px; font-weight: 700; }

.panel {
  display: flex;
  flex-direction: column;
  min-height: 0;
  overflow: hidden;
  border-radius: 5px;
  background: #fff;
  box-shadow: 0 1px 2px #bdbdbd;
}
.panel-title {
  flex: none;
  margin: 0;
  padding: 1px 10px 0;
  color: #666;
  font-size: 11px;
  font-weight: 400;
  line-height: 26px;
}
.filters {
  display: grid;
  flex: none;
  grid-template-columns: 1fr 1fr;
  gap: 12px;
  padding: 13px 6px 12px;
  background: #ececec;
}
.date { width: 100%; background: #dfdfdf; }
.times {
  position: relative;
  flex: 1;
  min-height: 0;
  padding-top: 5px;
  overflow: auto;
  scrollbar-width: none;
}
.times::before {
  content: "";
  position: absolute;
  top: 2px;
  right: 2px;
  width: 1px;
  height: 6px;
  background: #c8c8c8;
}
.time { padding: 0 8px; color: #000; font-weight: 500; line-height: 25px; }
.time-active { margin-bottom: 1px; background: #e8e8e8; color: #b02c5c; line-height: 33px; }

.fab {
  position: fixed;
  right: 7px;
  bottom: 9px;
  display: grid;
  place-items: center;
  width: 33px;
  height: 33px;
  border-radius: 50%;
  background: #7c1e52;
  box-shadow: 0 2px 4px #aaa;
}
```
